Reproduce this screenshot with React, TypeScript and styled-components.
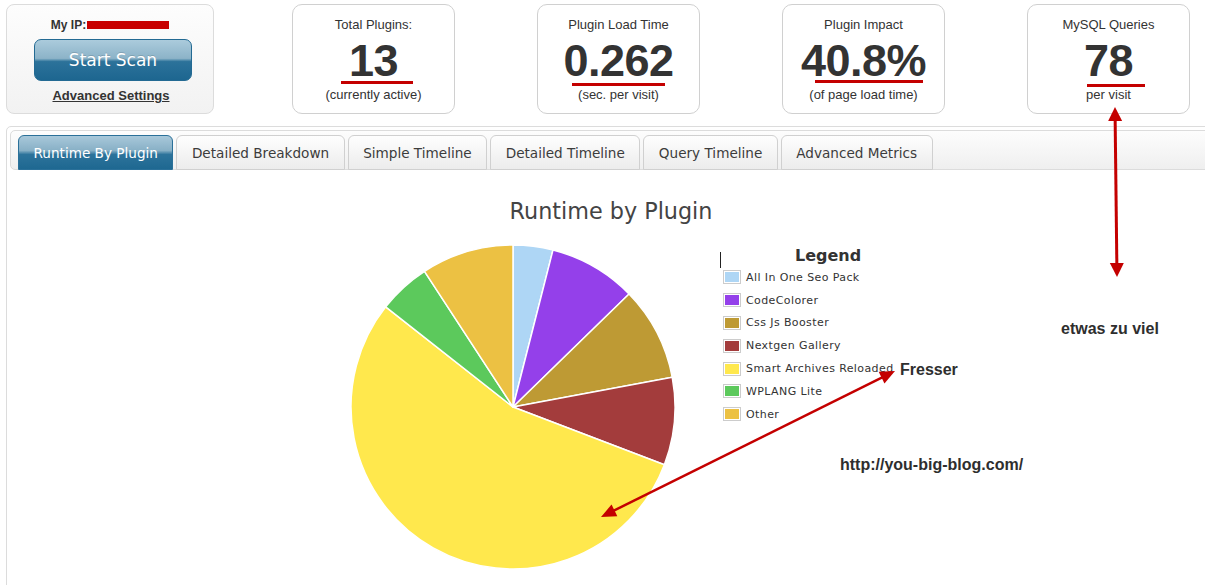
import React from 'react';
import styled, { createGlobalStyle } from 'styled-components';

const GlobalStyle = createGlobalStyle`
  html, body {
    margin: 0;
    padding: 0;
    background: #fff;
    overflow: hidden;
  }
  body {
    font-family: "Liberation Sans", Arial, sans-serif;
    color: #333;
  }
`;

type Slice = { name: string; time: number; color: string };

// seconds per visit, by plugin
const slices: Slice[] = [
  { name: 'All In One Seo Pack', time: 0.0104, color: '#aed6f5' },
  { name: 'CodeColorer', time: 0.0229, color: '#9440ea' },
  { name: 'Css Js Booster', time: 0.0245, color: '#be9a34' },
  { name: 'Nextgen Gallery', time: 0.0229, color: '#a33c3c' },
  { name: 'Smart Archives Reloaded', time: 0.1436, color: '#ffe84d' },
  { name: 'WPLANG Lite', time: 0.0136, color: '#5cc95c' },
  { name: 'Other', time: 0.0241, color: '#ecc143' },
];

const stats = [
  { title: 'Total Plugins:', value: '13', note: '(currently active)', line: 72, dx: 3, dy: 0 },
  { title: 'Plugin Load Time', value: '0.262', note: '(sec. per visit)', line: 93, dx: 0, dy: 2 },
  { title: 'Plugin Impact', value: '40.8%', note: '(of page load time)', line: 108, dx: 5, dy: -1 },
  { title: 'MySQL Queries', value: '78', note: 'per visit', line: 58, dx: 7, dy: 3 },
];

const tabs = [
  'Runtime By Plugin',
  'Detailed Breakdown',
  'Simple Timeline',
  'Detailed Timeline',
  'Query Timeline',
  'Advanced Metrics',
];

const Page = styled.div`
  position: relative;
  width: 1205px;
  height: 585px;
  overflow: hidden;
`;

const StatsRow = styled.div`
  display: flex;
  align-items: flex-start;
  gap: 82px;
  padding: 4px 0 0 6px;
`;

const ScanBox = styled.div`
  box-sizing: border-box;
  width: 208px;
  height: 110px;
  margin-right: -4px;
  padding-top: 13px;
  border: 1px solid #dcdcdc;
  border-radius: 8px;
  background: linear-gradient(#fdfdfd, #f2f2f2);
  display: flex;
  flex-direction: column;
  align-items: center;
`;

const IpRow = styled.div`
  display: flex;
  align-items: center;
  font-weight: bold;
  font-size: 12px;
  line-height: 14px;
  color: #333;
`;

const Redacted = styled.span`
  display: inline-block;
  width: 82px;
  height: 8px;
  margin-left: 1px;
  background: #c80000;
`;

const ScanButton = styled.button`
  box-sizing: border-box;
  width: 158px;
  height: 42px;
  margin: 7px 0 0 6px;
  padding: 0;
  border: 1px solid #236a93;
  border-radius: 7px;
  background: linear-gradient(#abcbdc 0%, #8cb3c8 46%, #2c729a 54%, #1d6690 100%);
  color: #fff;
  font-family: "DejaVu Sans", Verdana, sans-serif;
  font-size: 17px;
  text-shadow: 0 -1px 0 rgba(0, 0, 0, 0.15);
  cursor: pointer;
`;

const AdvancedLink = styled.a`
  margin: 7px 0 0 2px;
  font-weight: bold;
  font-size: 13px;
  line-height: 16px;
  color: #333;
  text-decoration: underline;
`;

const StatCard = styled.div`
  box-sizing: border-box;
  width: 163px;
  height: 110px;
  padding-top: 12px;
  border: 1px solid #d0d0d0;
  border-radius: 10px;
  background: #fff;
  display: flex;
  flex-direction: column;
  align-items: center;
`;

const StatTitle = styled.div`
  font-size: 13px;
  line-height: 16px;
  color: #333;
`;

const StatValue = styled.div`
  margin-top: 8px;
  font-weight: bold;
  font-size: 45px;
  line-height: 40px;
  letter-spacing: -0.5px;
  color: #333;
`;

const RedLine = styled.div<{ $w: number; $dx: number; $dy: number }>`
  width: ${(p) => p.$w}px;
  height: 3px;
  margin: ${(p) => p.$dy}px 0 ${(p) => -p.$dy}px ${(p) => p.$dx * 2}px;
  background: #c40000;
`;

const StatNote = styled.div`
  margin-top: 3px;
  font-size: 13px;
  line-height: 16px;
  color: #333;
`;

const Panel = styled.div`
  box-sizing: border-box;
  width: 1210px;
  height: 600px;
  margin: 12px 0 0 6px;
  padding: 3px;
  border: 1px solid #dcdcdc;
  border-radius: 5px;
`;

const TabNav = styled.ul`
  display: flex;
  gap: 3px;
  margin: 0;
  padding: 4px 0 0 7px;
  list-style: none;
  border: 1px solid #dcdcdc;
  border-radius: 5px;
  background: linear-gradient(#fdfdfd, #efefef);
`;

const Tab = styled.li<{ $active?: boolean }>`
  box-sizing: border-box;
  height: 35px;
  margin-bottom: -1px;
  padding: 0 14.5px;
  display: flex;
  align-items: center;
  border: 1px solid ${(p) => (p.$active ? '#2a7099' : '#d0d0d0')};
  border-radius: 6px 6px 0 0;
  background: ${(p) =>
    p.$active
      ? 'linear-gradient(#a8c8da 0%, #88b0c6 44%, #2d739b 56%, #1e6891 100%)'
      : 'linear-gradient(#fefefe, #ececec)'};
  color: ${(p) => (p.$active ? '#fff' : '#3c3c3c')};
  font-family: "DejaVu Sans", Verdana, sans-serif;
  font-size: 13.6px;
  white-space: nowrap;
`;

const Chart = styled.div`
  width: 1202px;
`;

const ChartTitle = styled.div`
  margin-top: 28px;
  text-align: center;
  font-family: "DejaVu Sans", Verdana, sans-serif;
  font-size: 22.3px;
  line-height: 26px;
  color: #444;
`;

const PieRow = styled.div`
  display: flex;
  align-items: flex-start;
  margin-top: 18px;
  padding-left: 338px;
`;

const Legend = styled.div`
  margin: 3px 0 0 42px;
  font-family: "DejaVu Sans", Verdana, sans-serif;
`;

const LegendHead = styled.div`
  display: flex;
  align-items: flex-start;
  height: 21px;
`;

const Caret = styled.span`
  width: 1px;
  height: 16px;
  margin-top: 7px;
  background: #222;
`;

const LegendTitle = styled.span`
  margin-left: 74px;
  font-weight: bold;
  font-size: 16px;
  line-height: 21px;
  color: #333;
`;

const LegendItem = styled.div`
  display: flex;
  align-items: center;
  gap: 5px;
  height: 22.8px;
  padding-left: 3px;
  font-size: 11px;
  letter-spacing: 0.4px;
  color: #333;
`;

const Swatch = styled.span<{ $color: string }>`
  box-sizing: border-box;
  width: 18px;
  height: 14px;
  padding: 1px;
  border: 1px solid #ccc;
  background: ${(p) => p.$color};
  background-clip: content-box;
`;

const Overlay = styled.svg`
  position: absolute;
  left: 0;
  top: 0;
  pointer-events: none;
`;

const Note = styled.div<{ $x: number; $y: number }>`
  position: absolute;
  left: ${(p) => p.$x}px;
  top: ${(p) => p.$y}px;
  font-weight: bold;
  font-size: 16px;
  line-height: 16px;
  color: #2e2e2e;
  white-space: nowrap;
`;

function slicePaths(cx: number, cy: number, r: number) {
  const total = slices.reduce((s, x) => s + x.time, 0);
  let a = 0;
  return slices.map((s) => {
    const a0 = a;
    a += (s.time / total) * Math.PI * 2;
    const x0 = cx + r * Math.sin(a0);
    const y0 = cy - r * Math.cos(a0);
    const x1 = cx + r * Math.sin(a);
    const y1 = cy - r * Math.cos(a);
    const large = a - a0 > Math.PI ? 1 : 0;
    return {
      ...s,
      d: `M${cx},${cy} L${x0.toFixed(2)},${y0.toFixed(2)} A${r},${r} 0 ${large} 1 ${x1.toFixed(2)},${y1.toFixed(2)} Z`,
    };
  });
}

const PieChart: React.FC = () => (
  <svg width={330} height={330} viewBox="0 0 330 330">
    {slicePaths(165, 165, 162).map((s) => (
      <path key={s.name} d={s.d} fill={s.color} stroke="#fff" strokeWidth={1.5} strokeLinejoin="round" />
    ))}
  </svg>
);

type ArrowProps = { x1: number; y1: number; x2: number; y2: number; w?: number; head?: number; spread?: number };

const DoubleArrow: React.FC<ArrowProps> = ({ x1, y1, x2, y2, w = 3, head = 14, spread = 6.5 }) => {
  const len = Math.hypot(x2 - x1, y2 - y1);
  const ux = (x2 - x1) / len;
  const uy = (y2 - y1) / len;
  const px = -uy;
  const py = ux;
  const tri = (tx: number, ty: number, sx: number, sy: number) => {
    const bx = tx - sx * head;
    const by = ty - sy * head;
    return `${tx},${ty} ${bx + px * spread},${by + py * spread} ${bx - px * spread},${by - py * spread}`;
  };
  return (
    <g fill="#c40000" stroke="none">
      <line
        x1={x1 + ux * head * 0.8}
        y1={y1 + uy * head * 0.8}
        x2={x2 - ux * head * 0.8}
        y2={y2 - uy * head * 0.8}
        stroke="#c40000"
        strokeWidth={w}
      />
      <polygon points={tri(x1, y1, -ux, -uy)} />
      <polygon points={tri(x2, y2, ux, uy)} />
    </g>
  );
};

const App: React.FC = () => (
  <Page>
    <GlobalStyle />
    <StatsRow>
      <ScanBox>
        <IpRow>
          My IP:<Redacted />
        </IpRow>
        <ScanButton>Start Scan</ScanButton>
        <AdvancedLink href="#">Advanced Settings</AdvancedLink>
      </ScanBox>
      {stats.map((s) => (
        <StatCard key={s.title}>
          <StatTitle>{s.title}</StatTitle>
          <StatValue>{s.value}</StatValue>
          <RedLine $w={s.line} $dx={s.dx} $dy={s.dy} />
          <StatNote>{s.note}</StatNote>
        </StatCard>
      ))}
    </StatsRow>

    <Panel>
      <TabNav>
        {tabs.map((t, i) => (
          <Tab key={t} $active={i === 0}>
            {t}
          </Tab>
        ))}
      </TabNav>
      <Chart>
        <ChartTitle>Runtime by Plugin</ChartTitle>
        <PieRow>
          <PieChart />
          <Legend>
            <LegendHead>
              <Caret />
              <LegendTitle>Legend</LegendTitle>
            </LegendHead>
            {slices.map((s) => (
              <LegendItem key={s.name}>
                <Swatch $color={s.color} />
                {s.name}
              </LegendItem>
            ))}
          </Legend>
        </PieRow>
      </Chart>
    </Panel>

    <Note $x={1061} $y={321}>etwas zu viel</Note>
    <Note $x={900} $y={362}>Fresser</Note>
    <Note $x={840} $y={457}>http://you-big-blog.com/</Note>

    <Overlay width={1205} height={585} viewBox="0 0 1205 585">
      <DoubleArrow x1={1115} y1={107} x2={1117} y2={277} head={14} spread={7} />
      <DoubleArrow x1={895} y1={371} x2={601} y2={517} w={2.5} head={15} spread={6.5} />
    </Overlay>
  </Page>
);

export default App;
